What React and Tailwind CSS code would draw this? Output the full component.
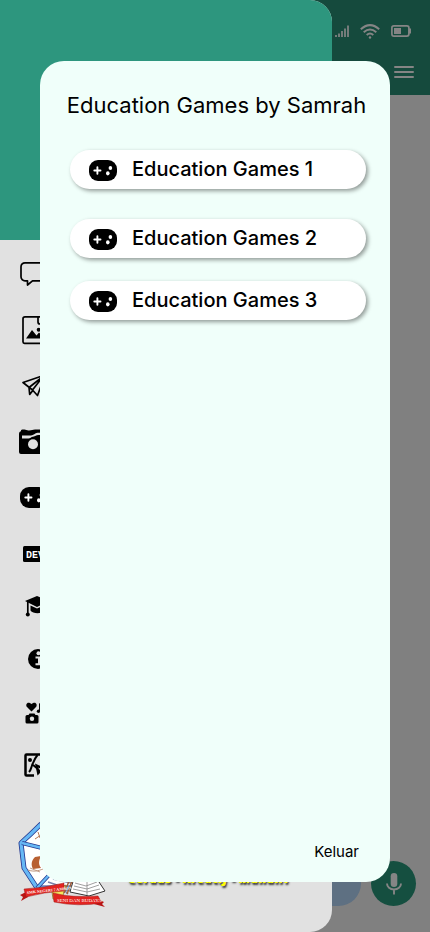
import React from "react";

function GamepadShape() {
  return (
    <>
      <rect width="28" height="21" rx="9" fill="#000" />
      <path d="M8.4 7.300v6.400M5.300 10.500h6.200" stroke="#fff" strokeWidth="1.9" strokeLinecap="round" />
      <ellipse cx="21.4" cy="8" rx="1.8" ry="2.1" fill="#fff" />
      <ellipse cx="18.8" cy="13.3" rx="1.8" ry="2.1" fill="#fff" />
    </>
  );
}

const mainItems = [
  {
    label: "Chat",
    icon: (
      <path
        d="M7 9.800h29a4 4 0 0 1 4 4v10a4 4 0 0 1-4 4H14.500L9.500 32v-4.200H7a4 4 0 0 1-4-4v-10a4 4 0 0 1 4-4Z"
        fill="none" stroke="#000" strokeWidth="1.700" strokeLinejoin="round"
      />
    ),
  },
  {
    label: "Gambar",
    icon: (
      <g>
        <path d="M20 7.800H7a2 2 0 0 0-2 2v23a1.500 1.500 0 0 0 1.500 1.500h23A1.500 1.500 0 0 0 31 32.800V16l-8-8.200h-3v5.200a2 2 0 0 0 2 2h9" fill="none" stroke="#000" strokeWidth="1.700" />
        <path d="M8 29.500 14 21l4.500 5.500 2.500-3 6 6Z" fill="#000" />
        <circle cx="20.700" cy="20.800" r="2" fill="#000" />
      </g>
    ),
  },
  {
    label: "Kirim",
    icon: (
      <path
        d="M5 17.500 27 10l-7.500 20.500L14.500 25 5 17.500ZM14.500 25 25 11.500 11 22.500l.700 7 3.100-4"
        fill="none" stroke="#000" strokeWidth="1.700" strokeLinejoin="round"
      />
    ),
  },
  {
    label: "Kamera",
    icon: (
      <g>
        <path d="M1 13c0-2 1-2.500 2-2.700V9.500C3 8.500 5 8.200 6.500 8.600S9 9.500 11 9.400c3-.200 3.500-1 6-1h12a2 2 0 0 1 2 2V31a2 2 0 0 1-2 2H3a2 2 0 0 1-2-2Z" fill="#000" />
        <path d="M4 14.500h9c2.500 0 4-2.800 6.500-2.800H28v2.300h-7.500c-2.500 0-3 1.500-5.500 1.700-2 .100-2.500 1.800-4.500 1.800H4Z" fill="#e1e1e1" />
        <circle cx="15" cy="23.300" r="6.500" fill="#000" />
        <circle cx="15" cy="23.300" r="5" fill="#e1e1e1" />
      </g>
    ),
  },
  {
    label: "Education Games",
    icon: <g transform="translate(2 10)"><GamepadShape /></g>,
  },
  {
    label: "Developer",
    icon: (
      <g>
        <rect x="5" y="13" width="28" height="16" rx="1.500" fill="#000" />
        <text x="8" y="25" className="fill-white font-['Liberation_Mono',monospace] text-[10px] font-bold">DEV</text>
      </g>
    ),
  },
];

const extraItems = [
  {
    label: "Pendidikan",
    icon: (
      <g fill="#000">
        <path d="m7 14 12-5 12 5-12 6Z" />
        <path d="M12.500 18.500 19 21.500l7-3v5C24 27 15 27 12.500 23.500Z" />
        <path d="M9.800 15v11" stroke="#000" strokeWidth="1.700" />
        <circle cx="9.800" cy="27.500" r="2" />
      </g>
    ),
  },
  {
    label: "Informasi",
    icon: (
      <g>
        <circle cx="20" cy="20" r="10" fill="#000" />
        <circle cx="20.500" cy="14.300" r="2" fill="#e1e1e1" />
        <path d="M17.500 18.500h3.500v7M17.500 25.300h7" fill="none" stroke="#e1e1e1" strokeWidth="2" />
      </g>
    ),
  },
  {
    label: "Hobi",
    icon: (
      <g fill="#000">
        <path d="M13.500 20.500 9 16c-2-2.500.500-6.500 4.500-3 4-3.500 6.500.500 4.500 3Z" />
        <path d="M9 24h1.500l1-1.500h5l1 1.500H19a1.500 1.500 0 0 1 1.500 1.500V31a1.500 1.500 0 0 1-1.500 1.500H9A1.500 1.500 0 0 1 7.500 31v-5.500A1.500 1.500 0 0 1 9 24Z" />
        <circle cx="14" cy="27.800" r="2.200" fill="#e1e1e1" />
        <path d="M21.800 20v-7l7-2v8" fill="none" stroke="#000" strokeWidth="1.500" />
        <circle cx="20.500" cy="20.300" r="1.700" />
        <circle cx="27" cy="19.300" r="1.700" />
        <circle cx="27" cy="28" r="4.500" />
      </g>
    ),
  },
  {
    label: "Karya",
    icon: (
      <g>
        <path d="M30 20v-7.500a1 1 0 0 0-1-1H8.500a1 1 0 0 0-1 1v19a1 1 0 0 0 1 1H16" fill="none" stroke="#000" strokeWidth="2.500" />
        <circle cx="12" cy="17" r="2" fill="#000" />
        <path d="M11 29c2-2 2-4 3-6.500s2.500-7 5.500-10.500M14.500 21.500l6 5" fill="none" stroke="#000" strokeWidth="2" />
        <path d="m17 20.500 12 5.500-5 2 4 6-3 2-3-6-2.500 2.500Z" fill="#000" />
        <path d="m20 24.500 4 1.800-2 1Z" fill="#e1e1e1" />
      </g>
    ),
  },
];

function NavItem({ item, height }) {
  return (
    <li className={height}>
      <button type="button" aria-label={item.label} className="flex h-full w-full items-center">
        <svg viewBox="0 0 40 40" className="h-10 w-10" aria-hidden="true">{item.icon}</svg>
      </button>
    </li>
  );
}

function SchoolLogo() {
  return (
    <svg viewBox="0 0 90 96" className="h-24 w-[90px] shrink-0" role="img" aria-label="SMK Negeri 7 Ambon">
      <path d="M45 3Q34 4 23 13 14 22 4 31l3 25 13 20h50l15-45Q65 4 45 3Z" fill="#fff" stroke="#263a91" strokeWidth="5" strokeLinejoin="round" />
      <path d="M45 3Q34 4 23 13 14 22 4 31l3 25 13 20h50l15-45Q65 4 45 3Z" fill="none" stroke="#67b8f5" strokeWidth="3.300" strokeLinejoin="round" />
      <path d="m5 31 20 5M20 76l14-15" stroke="#263a91" strokeWidth="4" />
      <path d="m5 31 20 5M20 76l14-15" stroke="#67b8f5" strokeWidth="2.400" />
      <path d="m18 27 6-4M21 20l2 6" stroke="#b77955" strokeWidth="1" />
      <path d="M18 45c-4 4-4 8-2 12l8-1c-3-4-2-8 0-12Z" fill="#b86032" />
      <path d="M11 58c6 2 10 1 15-1M13 56l10 4" fill="none" stroke="#c29982" strokeWidth="1" />
      <path d="m31 70 12 4 8 8M36 67l18 4" fill="none" stroke="#7883ad" strokeWidth="1.500" />
      <path d="m57 66-4 14 19 4 16-5-10-15-9 4Z" fill="#fff" stroke="#333" strokeWidth="1" />
      <path d="m58 71 11 3 11-4M57 74l13 3 12-4M56 77l14 3 13-3M70 70v13" fill="none" stroke="#888" strokeWidth=".800" />
      <path d="m35 80 14-7-4 14H36Z" fill="#f3e85e" stroke="#836828" strokeWidth=".700" />
      <path d="m47 81 6-14M50 82l5-13" stroke="#a35e37" strokeWidth="1.500" />
      <path d="m9 80-6 3 3 2-2 4 7-4Z" fill="#b91515" />
      <path d="M7 77q20-1 40-6v8q-20 1-38 6Z" fill="#e22420" stroke="#9e1515" strokeWidth=".500" />
      <path d="m80 87 7 3-2 2 3 3-11-3Z" fill="#b91515" />
      <path d="M36 81q19 5 45 3l4 7q-24 4-48-1Z" fill="#e22420" stroke="#9e1515" strokeWidth=".500" />
      <text x="10" y="82" transform="rotate(-6 10 82)" className="fill-white font-['Liberation_Serif',serif] text-[4px] font-bold">SMK NEGERI 7 AMBON</text>
      <text x="40" y="90" className="fill-white font-['Liberation_Serif',serif] text-[5px]">SENI DAN BUDAYA</text>
    </svg>
  );
}

function StatusIcons() {
  return (
    <div className="flex items-center gap-[11px] text-[#858585]">
      <svg viewBox="0 0 14 12" className="h-3 w-3.5" stroke="currentColor" strokeWidth="1.700" aria-hidden="true">
        <path d="M1 12v-2M4 12V8.500M7 12V6M10 12V3.500M13 12V.500" />
      </svg>
      <svg viewBox="0 0 20 15" className="h-[15px] w-5" fill="none" stroke="currentColor" strokeWidth="2" aria-hidden="true">
        <path d="M.800 5.200Q10-3 19.200 5.200M3.700 8.200q6.300-5.500 12.600 0M6.700 11q3.300-3 6.600 0" />
        <circle cx="10" cy="13.500" r="1.200" fill="currentColor" stroke="none" />
      </svg>
      <svg viewBox="0 0 20 12" className="h-3 w-5" fill="none" stroke="currentColor" strokeWidth="1.700" aria-hidden="true">
        <rect x=".900" y=".900" width="17" height="10.200" rx="2" />
        <rect x="3" y="3" width="7" height="6" fill="currentColor" stroke="none" />
        <path d="M19 3.500v5" strokeWidth="2" />
      </svg>
    </div>
  );
}

export default function App() {
  return (
    <div className="relative flex min-h-screen flex-col overflow-hidden bg-[#808080] font-['Inter',sans-serif] text-black">
      <header className="flex h-[95px] flex-col items-end bg-[#154a3d] pr-4">
        <div className="flex h-[62px] items-center pr-[3px]">
          <StatusIcons />
        </div>
        <button type="button" aria-label="Menu" className="flex h-5 w-5 flex-col justify-center gap-[3px]">
          <span className="h-0.5 w-5 rounded bg-[#858585]" />
          <span className="h-0.5 w-5 rounded bg-[#858585]" />
          <span className="h-0.5 w-5 rounded bg-[#858585]" />
        </button>
      </header>
      <main className="flex-1" />
      <footer className="flex items-center gap-2.5 pr-3.5 pb-[26px] pl-4">
        <input aria-label="Pesan" className="h-[45px] min-w-0 flex-1 rounded-full bg-[#5e7082] px-5" />
        <button type="button" aria-label="Rekam suara" className="flex h-[45px] w-[45px] items-center justify-center rounded-full bg-[#154f40]">
          <svg viewBox="0 0 16 22" className="h-[22px] w-4" fill="none" stroke="#858585" strokeWidth="1.900" aria-hidden="true">
            <rect x="4.700" y="0" width="6.600" height="14" rx="3.300" fill="#858585" stroke="none" />
            <path d="M1 10.500c0 3.500 3 6 7 6s7-2.500 7-6M8 16.500V21.500" />
          </svg>
        </button>
      </footer>

      <aside className="absolute inset-y-0 left-0 flex w-[332px] flex-col overflow-hidden rounded-r-[22px] bg-[#e1e1e1]">
        <div className="h-60 shrink-0 bg-[#2d967e]" />
        <nav aria-label="Menu utama" className="pt-[5px] pl-[18px]">
          <ul>
            {mainItems.map((item) => <NavItem key={item.label} item={item} height="h-14" />)}
            {extraItems.map((item) => <NavItem key={item.label} item={item} height="h-[52px]" />)}
          </ul>
        </nav>
        <div className="mt-auto flex items-end gap-[21px] pb-6 pl-[17px]">
          <SchoolLogo />
          <p className="pb-5 font-['Open_Sans',sans-serif] text-[13px] leading-5 font-extrabold whitespace-nowrap text-[#ffff00] italic [text-shadow:1px_2px_2px_#333]">
            Cerdas - Kreatif - Mandiri
          </p>
        </div>
      </aside>

      <section role="dialog" aria-labelledby="games-title" className="absolute inset-x-10 top-[61px] bottom-[50px] flex flex-col rounded-3xl bg-[#f0fffa]">
        <h1 id="games-title" className="pt-7 pl-[3px] text-center text-[22px] leading-8 whitespace-nowrap">Education Games by Samrah</h1>
        <div className="flex flex-col gap-[23px] pt-[29px] pr-6 pl-[30px]">
          <GameButton className="mb-[7px]">Education Games 1</GameButton>
          <GameButton>Education Games 2</GameButton>
          <GameButton>Education Games 3</GameButton>
        </div>
        <button type="button" className="mt-auto mr-[31px] mb-5 self-end text-[15px] leading-5">Keluar</button>
      </section>
    </div>
  );
}

function GameButton({ children, className = "" }) {
  return (
    <button type="button" className={`flex h-[39px] items-center gap-[15px] rounded-full bg-white pl-[19px] text-xl font-medium shadow-[2px_2px_4px_rgba(0,0,0,0.4)] ${className}`}>
      <svg viewBox="0 0 28 21" className="mt-0.5 h-[21px] w-7" aria-hidden="true"><GamepadShape /></svg>
      <span className="pb-px">{children}</span>
    </button>
  );
}
